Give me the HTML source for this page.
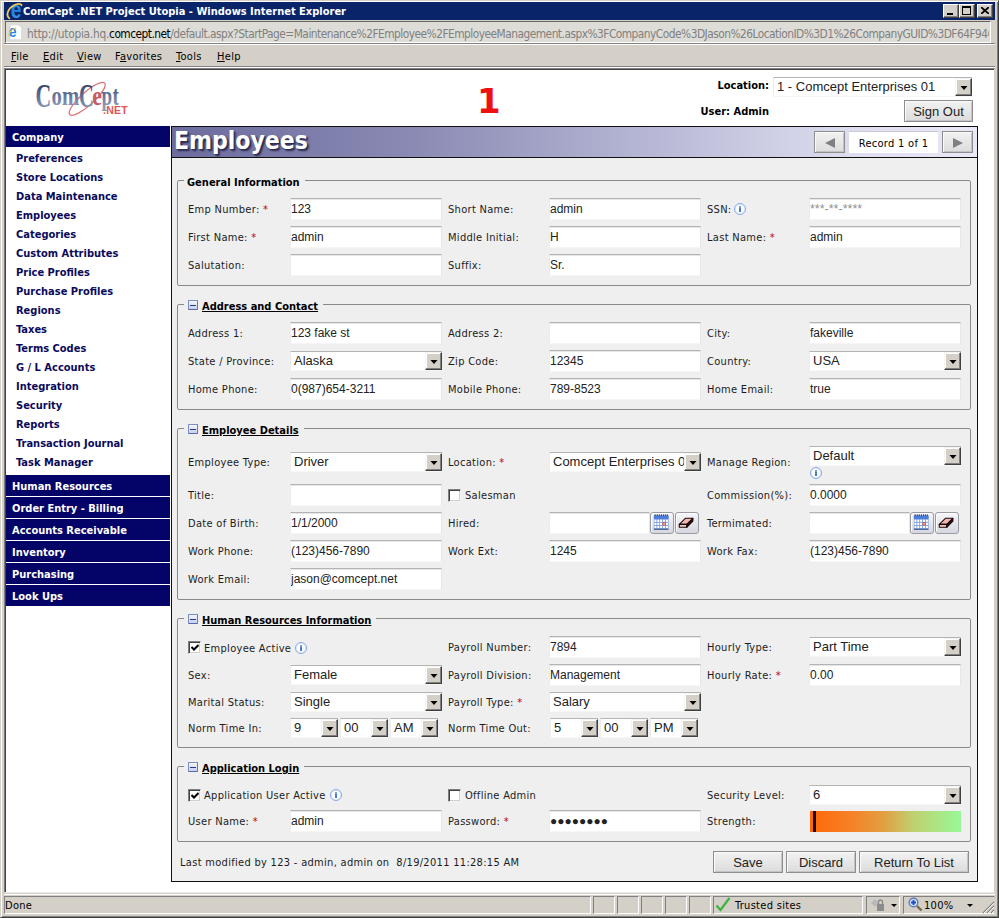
<!DOCTYPE html><html><head><meta charset='utf-8'><title>ComCept .NET Project Utopia - Windows Internet Explorer</title><style>
*{box-sizing:border-box;margin:0;padding:0}
html,body{width:999px;height:918px;overflow:hidden;background:#d4d0c8}
body{position:relative;font-family:'DejaVu Sans Condensed','DejaVu Sans','Liberation Sans',sans-serif;font-size:11px;color:#000;letter-spacing:.3px}
.a{position:absolute;white-space:nowrap}
.b{font-weight:bold;letter-spacing:0}
.lbl{position:absolute;white-space:nowrap;height:14px;line-height:14px;color:#1c1c1c}
.req{color:#c00000}
.inp{position:absolute;height:22px;background:#fff;border:1px solid;border-color:#b4b4b4 #e6e6e6 #f6f6f6 #ececec;box-shadow:inset 0 1px 0 #e6e6e6;font-family:'Liberation Sans',sans-serif;font-size:12px;line-height:21px;padding-left:0;letter-spacing:0;white-space:nowrap;overflow:hidden;color:#222}
.sel{position:absolute;height:20px;background:#fff;border:1px solid;border-color:#b4b4b4 #e6e6e6 #f6f6f6 #ececec;border-right:0;font-family:'Liberation Sans',sans-serif;font-size:13px;line-height:18px;padding-left:3px;letter-spacing:0;white-space:nowrap;overflow:hidden;color:#222}
.dd{position:absolute;right:0;top:0;width:17px;height:18px;background:#d4d0c8;border:1px solid;border-color:#f4f4f0 #404040 #404040 #f4f4f0;box-shadow:inset -1px -1px 0 #808080,inset 1px 1px 0 #fff}
.dd:after{content:"";position:absolute;left:4px;top:7px;border:4px solid transparent;border-top:4px solid #000;border-bottom:0;width:0;height:0;transform:scaleX(.875)}
.fs{position:absolute;border:1px solid #8a8a8a;border-radius:2px}
.lg{position:absolute;background:#efefef;font-weight:bold;letter-spacing:0;height:14px;line-height:14px;white-space:nowrap;color:#000}
.cx{position:absolute;width:10px;height:10px;border:1px solid #7e8ec0;border-bottom-color:#5868a8;border-right-color:#6878b0;background:linear-gradient(#f4f6ff,#c8d0f0);border-radius:1px}
.cx:after{content:"";position:absolute;left:1px;top:3.6px;width:6px;height:1.7px;background:#2c3c80}
.nav{position:absolute;left:6px;width:164px;background:#040468;color:#fff;font-weight:bold;letter-spacing:0;height:21px;line-height:23px;padding-left:6px;font-size:11px}
.ni{position:absolute;left:16px;color:#0a0a5c;font-weight:bold;letter-spacing:0;font-size:11px;height:16px;line-height:16px;white-space:nowrap}
.btn{position:absolute;background:linear-gradient(#f2f2f2,#dcdcdc);border:1px solid #8e8e8e;box-shadow:inset 1px 1px 0 #fafafa,inset -1px -1px 0 #c4c4c4;font-family:'Liberation Sans',sans-serif;font-size:13px;letter-spacing:0;text-align:center;color:#222}
.ib{position:absolute;background:linear-gradient(#f6f6fa,#d6d6e0);border:1px solid #9a9aa2;border-radius:3px;box-shadow:inset 1px 1px 0 #fff}
.chk{position:absolute;width:13px;height:13px;background:#fff;border:1px solid;border-color:#808080 #f4f4f4 #f4f4f4 #808080;box-shadow:inset 1px 1px 0 #404040,inset -1px -1px 0 #d4d0c8}
.info{position:absolute;width:12px;height:12px;border:1px solid #88a8e6;border-radius:50%;background:#fff;box-shadow:inset 0 0 0 1px #e2ecfc}
.info:before{content:"";position:absolute;left:4px;top:1.6px;width:2px;height:2px;background:#4a7ad6;border-radius:1px}
.info:after{content:"";position:absolute;left:4px;top:4.4px;width:2px;height:4px;background:#4a7ad6}
.sp{position:absolute;top:896px;height:18px;border:1px solid;border-color:#808080 #fff #fff #808080}
</style></head><body>
<div class='a' style='left:0;top:0;width:999px;height:918px;border:1px solid;border-color:#d4d0c8 #404040 #404040 #d4d0c8;box-shadow:inset 1px 1px 0 #fff,inset -1px -1px 0 #808080'></div>
<div class='a' style='left:4px;top:2px;width:991px;height:18px;background:#0a246a'></div>
<div class='a b' style='left:23px;top:4px;color:#fff;font-size:11px;line-height:16px'>ComCept .NET Project Utopia - Windows Internet Explorer</div>
<svg class='a' style='left:5px;top:2px' width='18' height='18' viewBox='0 0 18 18'><defs><linearGradient id='ie1' x1='0' y1='0' x2='0' y2='1'><stop offset='0' stop-color='#58b4f8'/><stop offset='.55' stop-color='#1c7ee0'/><stop offset='1' stop-color='#54b0f4'/></linearGradient></defs><text transform='translate(5.8 16) scale(.8 1)' font-family='Liberation Sans,sans-serif' font-weight='bold' font-size='24' fill='url(#ie1)'>e</text><path d='M4.4 16.4C.4 13 3 6.5 9 3.2C12 1.6 15.8 1.2 16.6 3.2' fill='none' stroke='#f0cc58' stroke-width='1.8' stroke-linecap='round'/></svg>
<div class='a' style='left:943px;top:4px;width:16px;height:14px;background:#d4d0c8;border:1px solid;border-color:#fff #404040 #404040 #fff;box-shadow:inset -1px -1px 0 #808080'>
<div class='a' style='left:3px;top:8px;width:6px;height:2px;background:#000'></div>
</div>
<div class='a' style='left:959px;top:4px;width:16px;height:14px;background:#d4d0c8;border:1px solid;border-color:#fff #404040 #404040 #fff;box-shadow:inset -1px -1px 0 #808080'>
<div class='a' style='left:2px;top:1px;width:9px;height:9px;border:1px solid #000;border-top-width:2px'></div>
</div>
<div class='a' style='left:977px;top:4px;width:16px;height:14px;background:#d4d0c8;border:1px solid;border-color:#fff #404040 #404040 #fff;box-shadow:inset -1px -1px 0 #808080'>
<svg class='a' style='left:3px;top:2px' width='8' height='7' viewBox='0 0 8 7'><path d='M0 0L8 7M8 0L0 7' stroke='#000' stroke-width='1.8'/></svg>
</div>
<div class='a' style='left:5px;top:21px;width:986px;height:22px;background:#dedcd6;border:1px solid;border-color:#686460 #fff #fff #686460'></div>
<div class='a' style='left:4px;top:43px;width:991px;height:2px;background:#fff;border-top:1px solid #808080'></div>
<svg class='a' style='left:8px;top:24px' width='16' height='17' viewBox='0 0 16 17'><path d='M2 .8h8.6l3 3v12H2z' fill='#fff' stroke='#d4d4d4' stroke-width='.8'/><text transform='translate(.8 13.2) scale(.82 1)' font-family='Liberation Sans,sans-serif' font-weight='bold' font-size='17' fill='#2484e4'>e</text><path d='M1.4 12.8C-.2 10 2.4 5.8 7.8 4' fill='none' stroke='#f0c64c' stroke-width='1.3' stroke-linecap='round'/></svg>
<div class='a' id='addr' style='left:27px;top:26px;font-size:11.8px;line-height:16px;color:#808080;letter-spacing:-.5px;width:962px;overflow:hidden'><span style='letter-spacing:-.25px'>http://utopia.hq.</span><span style='color:#000'>comcept.net</span>/default.aspx?StartPage=Maintenance%2FEmployee%2FEmployeeManagement.aspx%3FCompanyCode%3DJason%26LocationID%3D1%26CompanyGUID%3DF64F946</div>
<div class='a' style='left:11px;top:50px;line-height:14px'><u>F</u>ile</div>
<div class='a' style='left:43px;top:50px;line-height:14px'><u>E</u>dit</div>
<div class='a' style='left:77px;top:50px;line-height:14px'><u>V</u>iew</div>
<div class='a' style='left:115px;top:50px;line-height:14px'>F<u>a</u>vorites</div>
<div class='a' style='left:176px;top:50px;line-height:14px'><u>T</u>ools</div>
<div class='a' style='left:217px;top:50px;line-height:14px'><u>H</u>elp</div>
<div class='a' style='left:4px;top:66px;width:991px;height:1px;background:#808080'></div><div class='a' style='left:4px;top:67px;width:991px;height:1px;background:#fff'></div>
<div class='a' style='left:4px;top:68px;width:991px;height:825px;background:#fff;border:1px solid;border-color:#808080 #d4d0c8 #ecece8 #808080;box-shadow:inset 1px 1px 0 #404040'></div>
<svg class='a' style='left:30px;top:76px' width='105' height='46' viewBox='0 0 105 46'><defs><linearGradient id='lg1' gradientUnits='userSpaceOnUse' x1='0' y1='-22' x2='0' y2='2'><stop offset='0' stop-color='#36446e'/><stop offset='1' stop-color='#8e9cba'/></linearGradient></defs><ellipse cx='57.2' cy='22.8' rx='23.5' ry='6.5' fill='none' stroke='#e07474' stroke-width='1.3' transform='rotate(-42 57.2 22.8)'/><g font-family='Liberation Serif,serif' font-weight='bold' fill='url(#lg1)'><text transform='translate(5.6 30.8) scale(.66 1)' font-size='33'>C</text><text transform='translate(21.4 28.5) scale(.74 1)' font-size='28'>om</text><text transform='translate(49 30.8) scale(.62 1)' font-size='33'>C</text><text transform='translate(62.3 28.5) scale(.77 1)' font-size='28' fill='#cc5a62'>e</text><text transform='translate(71.6 28.5) scale(.68 1)' font-size='28'>pt</text></g><text x='73' y='37.8' font-family='Liberation Sans,sans-serif' font-weight='bold' font-size='11' fill='#e25454' textLength='25' lengthAdjust='spacingAndGlyphs'>.NET</text></svg>
<div class='a b' style='left:477px;top:81px;color:#ee1010;font-size:34px;line-height:40px;font-family:"DejaVu Sans",sans-serif'>1</div>
<div class='a b' style='left:669px;width:100px;text-align:right;top:79px;line-height:14px'>Location:</div>
<div class='sel' style='left:773px;top:77px;width:199px;height:20px;font-size:13px;padding-left:3px'>1 - Comcept Enterprises 01<div class='dd'></div></div>
<div class='a b' style='left:669px;width:100px;text-align:right;top:105px;line-height:14px'>User: Admin</div>
<div class='btn' style='left:904px;top:100px;width:69px;height:22px;line-height:22px;font-size:13px'>Sign Out</div>
<div class='nav' style='top:126px'>Company</div>
<div class='ni' style='top:151px'>Preferences</div>
<div class='ni' style='top:170px'>Store Locations</div>
<div class='ni' style='top:189px'>Data Maintenance</div>
<div class='ni' style='top:208px'>Employees</div>
<div class='ni' style='top:227px'>Categories</div>
<div class='ni' style='top:246px'>Custom Attributes</div>
<div class='ni' style='top:265px'>Price Profiles</div>
<div class='ni' style='top:284px'>Purchase Profiles</div>
<div class='ni' style='top:303px'>Regions</div>
<div class='ni' style='top:322px'>Taxes</div>
<div class='ni' style='top:341px'>Terms Codes</div>
<div class='ni' style='top:360px'>G / L Accounts</div>
<div class='ni' style='top:379px'>Integration</div>
<div class='ni' style='top:398px'>Security</div>
<div class='ni' style='top:417px'>Reports</div>
<div class='ni' style='top:436px'>Transaction Journal</div>
<div class='ni' style='top:455px'>Task Manager</div>
<div class='nav' style='top:475px'>Human Resources</div>
<div class='nav' style='top:497px'>Order Entry - Billing</div>
<div class='nav' style='top:519px'>Accounts Receivable</div>
<div class='nav' style='top:541px'>Inventory</div>
<div class='nav' style='top:563px'>Purchasing</div>
<div class='nav' style='top:585px'>Look Ups</div>
<div class='a' style='left:171px;top:126px;width:807px;height:756px;background:#efefef;border:1px solid #101010'></div>
<div class='a' style='left:172px;top:127px;width:805px;height:31px;background:linear-gradient(90deg,#6c6c9e 0%,#8a8ab4 30%,#b8b8d6 60%,#dedef0 85%,#e8e8f6 100%);border-bottom:1px solid #101010'></div>
<div class='a b' id='ttl' style='left:174px;top:124px;color:#fff;font-size:24.5px;line-height:34px;text-shadow:2px 2px 2px #2c2c50,1px 1px 1px #3c3c60'>Employees</div>
<div class='btn' style='left:814px;top:131px;width:31px;height:22px'><div class='a' style='left:10px;top:6px;border:5px solid transparent;border-right:10px solid #808080;border-left:0'></div></div>
<div class='a' style='left:849px;top:131px;width:89px;height:22px;background:#fff;border-top:1px solid #c8c8d8;text-align:center;line-height:24px'>Record 1 of 1</div>
<div class='btn' style='left:942px;top:131px;width:31px;height:22px'><div class='a' style='left:10px;top:6px;border:5px solid transparent;border-left:10px solid #808080;border-right:0'></div></div>
<div class='fs' style='left:177px;top:180px;width:794px;height:106px'></div>
<div class='lg' style='left:184px;top:176px;padding:0 5px 0 3px'>General Information</div>
<div class='lbl' style='left:188px;top:203px'>Emp Number: <span class='req'>*</span></div>
<div class='inp' style='left:290px;top:198px;width:152px;'>123</div>
<div class='lbl' style='left:448px;top:203px'>Short Name:</div>
<div class='inp' style='left:549px;top:198px;width:152px;'>admin</div>
<div class='lbl' style='left:707px;top:203px'>SSN:</div>
<div class='info' style='left:734px;top:203px'></div>
<div class='inp' style='left:809px;top:198px;width:152px;color:#909090;font-size:12.5px;line-height:21px'>***-**-****</div>
<div class='lbl' style='left:188px;top:231px'>First Name: <span class='req'>*</span></div>
<div class='inp' style='left:290px;top:226px;width:152px;'>admin</div>
<div class='lbl' style='left:448px;top:231px'>Middle Initial:</div>
<div class='inp' style='left:549px;top:226px;width:152px;'>H</div>
<div class='lbl' style='left:707px;top:231px'>Last Name: <span class='req'>*</span></div>
<div class='inp' style='left:809px;top:226px;width:152px;'>admin</div>
<div class='lbl' style='left:188px;top:259px'>Salutation:</div>
<div class='inp' style='left:290px;top:254px;width:152px;'></div>
<div class='lbl' style='left:448px;top:259px'>Suffix:</div>
<div class='inp' style='left:549px;top:254px;width:152px;'>Sr.</div>
<div class='fs' style='left:177px;top:304px;width:794px;height:106px'></div>
<div class='lg' style='left:184px;top:300px;padding:0 5px 0 18px'><u>Address and Contact</u><div class='cx' style='left:4px;top:0px'></div></div>
<div class='lbl' style='left:188px;top:327px'>Address 1:</div>
<div class='inp' style='left:290px;top:322px;width:152px;'>123 fake st</div>
<div class='lbl' style='left:448px;top:327px'>Address 2:</div>
<div class='inp' style='left:549px;top:322px;width:152px;'></div>
<div class='lbl' style='left:707px;top:327px'>City:</div>
<div class='inp' style='left:809px;top:322px;width:152px;'>fakeville</div>
<div class='lbl' style='left:188px;top:355px'>State / Province:</div>
<div class='sel' style='left:290px;top:351px;width:152px'>Alaska<div class='dd'></div></div>
<div class='lbl' style='left:448px;top:355px'>Zip Code:</div>
<div class='inp' style='left:549px;top:350px;width:152px;'>12345</div>
<div class='lbl' style='left:707px;top:355px'>Country:</div>
<div class='sel' style='left:809px;top:351px;width:152px'>USA<div class='dd'></div></div>
<div class='lbl' style='left:188px;top:383px'>Home Phone:</div>
<div class='inp' style='left:290px;top:378px;width:152px;'>0(987)654-3211</div>
<div class='lbl' style='left:448px;top:383px'>Mobile Phone:</div>
<div class='inp' style='left:549px;top:378px;width:152px;'>789-8523</div>
<div class='lbl' style='left:707px;top:383px'>Home Email:</div>
<div class='inp' style='left:809px;top:378px;width:152px;'>true</div>
<div class='fs' style='left:177px;top:428px;width:794px;height:172px'></div>
<div class='lg' style='left:184px;top:424px;padding:0 5px 0 18px'><u>Employee Details</u><div class='cx' style='left:4px;top:0px'></div></div>
<div class='lbl' style='left:188px;top:456px'>Employee Type:</div>
<div class='sel' style='left:290px;top:452px;width:152px'>Driver<div class='dd'></div></div>
<div class='lbl' style='left:448px;top:456px'>Location: <span class='req'>*</span></div>
<div class='sel' style='left:549px;top:452px;width:152px'>Comcept Enterprises 01<div class='dd'></div></div>
<div class='lbl' style='left:707px;top:456px'>Manage Region:</div>
<div class='sel' style='left:809px;top:446px;width:152px'>Default<div class='dd'></div></div>
<div class='info' style='left:810px;top:467px'></div>
<div class='lbl' style='left:188px;top:489px'>Title:</div>
<div class='inp' style='left:290px;top:484px;width:152px;'></div>
<div class='chk' style='left:448px;top:489px'></div>
<div class='lbl' style='left:465px;top:489px'>Salesman</div>
<div class='lbl' style='left:707px;top:489px'>Commission(%):</div>
<div class='inp' style='left:809px;top:484px;width:152px;'>0.0000</div>
<div class='lbl' style='left:188px;top:517px'>Date of Birth:</div>
<div class='inp' style='left:290px;top:512px;width:152px;'>1/1/2000</div>
<div class='lbl' style='left:448px;top:517px'>Hired:</div>
<div class='inp' style='left:549px;top:512px;width:101px;'></div>
<div class='lbl' style='left:707px;top:517px'>Termimated:</div>
<div class='inp' style='left:809px;top:512px;width:101px;'></div>
<div class='ib' style='left:650px;top:512px;width:24px;height:22px'><svg class='a' style='left:2px;top:1px' width='17' height='17' viewBox='0 0 17 17'><rect x='.9' y='1.6' width='14.6' height='13.6' fill='#6e92d6'/><rect x='.9' y='1.6' width='14.6' height='3.2' fill='#4a7cdc'/><path d='M1.6 1.2h13.4' stroke='#181818' stroke-width='1.2' stroke-dasharray='1.1 1'/><path d='M.9 15.4h14.6' stroke='#34507c' stroke-width='.9'/><g fill='#fff'><rect x='1.40' y='5.60' width='2.1' height='2.3'/><rect x='4.25' y='5.60' width='2.1' height='2.3'/><rect x='7.10' y='5.60' width='2.1' height='2.3'/><rect x='9.95' y='5.60' width='2.1' height='2.3'/><rect x='12.80' y='5.60' width='2.1' height='2.3'/><rect x='1.40' y='8.70' width='2.1' height='2.3'/><rect x='4.25' y='8.70' width='2.1' height='2.3'/><rect x='7.10' y='8.70' width='2.1' height='2.3'/><rect x='12.80' y='8.70' width='2.1' height='2.3'/><rect x='1.40' y='11.80' width='2.1' height='2.3'/><rect x='4.25' y='11.80' width='2.1' height='2.3'/><rect x='7.10' y='11.80' width='2.1' height='2.3'/><rect x='9.95' y='11.80' width='2.1' height='2.3'/><rect x='12.80' y='11.80' width='2.1' height='2.3'/></g><rect x='9.6' y='8.3' width='3.1' height='3.1' fill='#e8442c'/><rect x='10.4' y='9.1' width='1.5' height='1.5' fill='#ffc8b8'/></svg></div>
<div class='ib' style='left:675px;top:512px;width:24px;height:22px'><svg class='a' style='left:2px;top:3px' width='18' height='14' viewBox='0 0 18 14'><g transform='translate(-.6 .4) scale(.94)'><path d='M8.5 2h8l-6.5 6.5H2z' fill='#f2b8b0' stroke='#180808' stroke-width='1.1' stroke-linejoin='round'/><path d='M2 8.5h8v3.1H2z' fill='#f6c8c0' stroke='#180808' stroke-width='1.1' stroke-linejoin='round'/><path d='M10 8.5L16.5 2v3.1L10 11.6z' fill='#2c1414' stroke='#180808' stroke-width='1.1' stroke-linejoin='round'/></g></svg></div>
<div class='ib' style='left:910px;top:512px;width:24px;height:22px'><svg class='a' style='left:2px;top:1px' width='17' height='17' viewBox='0 0 17 17'><rect x='.9' y='1.6' width='14.6' height='13.6' fill='#6e92d6'/><rect x='.9' y='1.6' width='14.6' height='3.2' fill='#4a7cdc'/><path d='M1.6 1.2h13.4' stroke='#181818' stroke-width='1.2' stroke-dasharray='1.1 1'/><path d='M.9 15.4h14.6' stroke='#34507c' stroke-width='.9'/><g fill='#fff'><rect x='1.40' y='5.60' width='2.1' height='2.3'/><rect x='4.25' y='5.60' width='2.1' height='2.3'/><rect x='7.10' y='5.60' width='2.1' height='2.3'/><rect x='9.95' y='5.60' width='2.1' height='2.3'/><rect x='12.80' y='5.60' width='2.1' height='2.3'/><rect x='1.40' y='8.70' width='2.1' height='2.3'/><rect x='4.25' y='8.70' width='2.1' height='2.3'/><rect x='7.10' y='8.70' width='2.1' height='2.3'/><rect x='12.80' y='8.70' width='2.1' height='2.3'/><rect x='1.40' y='11.80' width='2.1' height='2.3'/><rect x='4.25' y='11.80' width='2.1' height='2.3'/><rect x='7.10' y='11.80' width='2.1' height='2.3'/><rect x='9.95' y='11.80' width='2.1' height='2.3'/><rect x='12.80' y='11.80' width='2.1' height='2.3'/></g><rect x='9.6' y='8.3' width='3.1' height='3.1' fill='#e8442c'/><rect x='10.4' y='9.1' width='1.5' height='1.5' fill='#ffc8b8'/></svg></div>
<div class='ib' style='left:935px;top:512px;width:24px;height:22px'><svg class='a' style='left:2px;top:3px' width='18' height='14' viewBox='0 0 18 14'><g transform='translate(-.6 .4) scale(.94)'><path d='M8.5 2h8l-6.5 6.5H2z' fill='#f2b8b0' stroke='#180808' stroke-width='1.1' stroke-linejoin='round'/><path d='M2 8.5h8v3.1H2z' fill='#f6c8c0' stroke='#180808' stroke-width='1.1' stroke-linejoin='round'/><path d='M10 8.5L16.5 2v3.1L10 11.6z' fill='#2c1414' stroke='#180808' stroke-width='1.1' stroke-linejoin='round'/></g></svg></div>
<div class='lbl' style='left:188px;top:545px'>Work Phone:</div>
<div class='inp' style='left:290px;top:540px;width:152px;'>(123)456-7890</div>
<div class='lbl' style='left:448px;top:545px'>Work Ext:</div>
<div class='inp' style='left:549px;top:540px;width:152px;'>1245</div>
<div class='lbl' style='left:707px;top:545px'>Work Fax:</div>
<div class='inp' style='left:809px;top:540px;width:152px;'>(123)456-7890</div>
<div class='lbl' style='left:188px;top:573px'>Work Email:</div>
<div class='inp' style='left:290px;top:568px;width:152px;'>jason@comcept.net</div>
<div class='fs' style='left:177px;top:618px;width:794px;height:130px'></div>
<div class='lg' style='left:184px;top:614px;padding:0 5px 0 18px'><u>Human Resources Information</u><div class='cx' style='left:4px;top:0px'></div></div>
<div class='chk' style='left:188px;top:641px'><svg class='a' style='left:2px;top:2px' width='8' height='8' viewBox='0 0 8 8'><path d='M0.5 3L3 5.5L7.5 1' fill='none' stroke='#000' stroke-width='2'/></svg></div>
<div class='lbl' style='left:204px;top:642px'>Employee Active</div>
<div class='info' style='left:295px;top:642px'></div>
<div class='lbl' style='left:448px;top:641px'>Payroll Number:</div>
<div class='inp' style='left:549px;top:636px;width:152px;'>7894</div>
<div class='lbl' style='left:707px;top:641px'>Hourly Type:</div>
<div class='sel' style='left:809px;top:637px;width:152px'>Part Time<div class='dd'></div></div>
<div class='lbl' style='left:188px;top:669px'>Sex:</div>
<div class='sel' style='left:290px;top:665px;width:152px'>Female<div class='dd'></div></div>
<div class='lbl' style='left:448px;top:669px'>Payroll Division:</div>
<div class='inp' style='left:549px;top:664px;width:152px;'>Management</div>
<div class='lbl' style='left:707px;top:669px'>Hourly Rate: <span class='req'>*</span></div>
<div class='inp' style='left:809px;top:664px;width:152px;'>0.00</div>
<div class='lbl' style='left:188px;top:696px'>Marital Status:</div>
<div class='sel' style='left:290px;top:692px;width:152px'>Single<div class='dd'></div></div>
<div class='lbl' style='left:448px;top:696px'>Payroll Type: <span class='req'>*</span></div>
<div class='sel' style='left:549px;top:692px;width:152px'>Salary<div class='dd'></div></div>
<div class='lbl' style='left:188px;top:722px'>Norm Time In:</div>
<div class='sel' style='left:290px;top:718px;width:48px'>9<div class='dd'></div></div>
<div class='sel' style='left:340px;top:718px;width:48px'>00<div class='dd'></div></div>
<div class='sel' style='left:390px;top:718px;width:48px'>AM<div class='dd'></div></div>
<div class='lbl' style='left:448px;top:722px'>Norm Time Out:</div>
<div class='sel' style='left:550px;top:718px;width:48px'>5<div class='dd'></div></div>
<div class='sel' style='left:600px;top:718px;width:48px'>00<div class='dd'></div></div>
<div class='sel' style='left:650px;top:718px;width:48px'>PM<div class='dd'></div></div>
<div class='fs' style='left:177px;top:766px;width:794px;height:76px'></div>
<div class='lg' style='left:184px;top:762px;padding:0 5px 0 18px'><u>Application Login</u><div class='cx' style='left:4px;top:0px'></div></div>
<div class='chk' style='left:188px;top:789px'><svg class='a' style='left:2px;top:2px' width='8' height='8' viewBox='0 0 8 8'><path d='M0.5 3L3 5.5L7.5 1' fill='none' stroke='#000' stroke-width='2'/></svg></div>
<div class='lbl' style='left:204px;top:789px'>Application User Active</div>
<div class='info' style='left:330px;top:789px'></div>
<div class='chk' style='left:448px;top:789px'></div>
<div class='lbl' style='left:465px;top:789px'>Offline Admin</div>
<div class='lbl' style='left:707px;top:789px'>Security Level:</div>
<div class='sel' style='left:809px;top:785px;width:152px'>6<div class='dd'></div></div>
<div class='lbl' style='left:188px;top:815px'>User Name: <span class='req'>*</span></div>
<div class='inp' style='left:290px;top:810px;width:152px;'>admin</div>
<div class='lbl' style='left:448px;top:815px'>Password: <span class='req'>*</span></div>
<div class='inp' style='left:549px;top:810px;width:152px;font-family:'DejaVu Sans',sans-serif;font-size:12px;line-height:20px;padding-left:0;letter-spacing:-.9px;text-indent:-.5px'>&#9679;&#9679;&#9679;&#9679;&#9679;&#9679;&#9679;&#9679;</div>
<div class='lbl' style='left:707px;top:815px'>Strength:</div>
<div class='a' style='left:810px;top:811px;width:151px;height:21px;background:linear-gradient(90deg,#ff6808 0%,#f4842a 30%,#e0a244 50%,#c0d070 68%,#98f898 100%)'><div class='a' style='left:3px;top:0;width:3px;height:21px;background:#181008'></div></div>
<div class='lbl' style='left:180px;top:856px'>Last modified by 123 - admin, admin on&nbsp; 8/19/2011 11:28:15 AM</div>
<div class='btn' style='left:713px;top:851px;width:70px;height:22px;line-height:21px;font-size:13px'>Save</div>
<div class='btn' style='left:786px;top:851px;width:70px;height:22px;line-height:21px;font-size:13px'>Discard</div>
<div class='btn' style='left:859px;top:851px;width:110px;height:22px;line-height:21px;font-size:13px'>Return To List</div>
<div class='a' style='left:4px;top:894px;width:991px;height:1px;background:#fff'></div>
<div class='sp' style='left:4px;width:587px'></div>
<div class='a' style='left:5px;top:899px;line-height:14px'>Done</div>
<div class='sp' style='left:593px;width:22px'></div>
<div class='sp' style='left:617px;width:22px'></div>
<div class='sp' style='left:641px;width:22px'></div>
<div class='sp' style='left:665px;width:22px'></div>
<div class='sp' style='left:689px;width:22px'></div>
<div class='sp' style='left:713px;width:150px'></div>
<div class='sp' style='left:866px;width:34px'></div>
<div class='sp' style='left:903px;width:92px;border-right-color:#d4d0c8'></div>
<svg class='a' style='left:715px;top:897px' width='16' height='15' viewBox='0 0 16 15'><path d='M1.5 8.5L5.5 13L14.5 1' fill='none' stroke='#3cb43c' stroke-width='2.2'/></svg>
<div class='a' style='left:735px;top:899px;line-height:14px'>Trusted sites</div>
<svg class='a' style='left:870px;top:897px' width='16' height='15' viewBox='0 0 16 15'><path d='M1 6l4-4 4 4-4 4z' fill='#b8b8b8'/><rect x='7' y='7' width='7' height='7' fill='#8c8c8c'/><path d='M8.5 7V5a2 2 0 0 1 4 0v2' fill='none' stroke='#8c8c8c' stroke-width='1.4'/></svg>
<div class='a' style='left:891px;top:904px;border:3px solid transparent;border-top:3px solid #000;border-bottom:0'></div>
<svg class='a' style='left:908px;top:897px' width='15' height='15' viewBox='0 0 15 15'><circle cx='5.5' cy='5.5' r='4.3' fill='#d8e8ff' stroke='#5c7cb8' stroke-width='1.4'/><path d='M9 9L13.5 13.5' stroke='#7c6450' stroke-width='2.4'/><path d='M3 5.5h5M5.5 3v5' stroke='#1848c8' stroke-width='1.8'/></svg>
<div class='a' style='left:924px;top:899px;line-height:14px'>100%</div>
<div class='a' style='left:967px;top:904px;border:3px solid transparent;border-top:3px solid #000;border-bottom:0'></div>
<svg class='a' style='left:982px;top:901px' width='13' height='13' viewBox='0 0 13 13'><path d='M12 1L1 12M12 5L5 12M12 9L9 12' stroke='#808080' stroke-width='1.2'/><path d='M12 2L2 12M12 6L6 12M12 10L10 12' stroke='#fff' stroke-width='.8'/></svg>
</body></html>
